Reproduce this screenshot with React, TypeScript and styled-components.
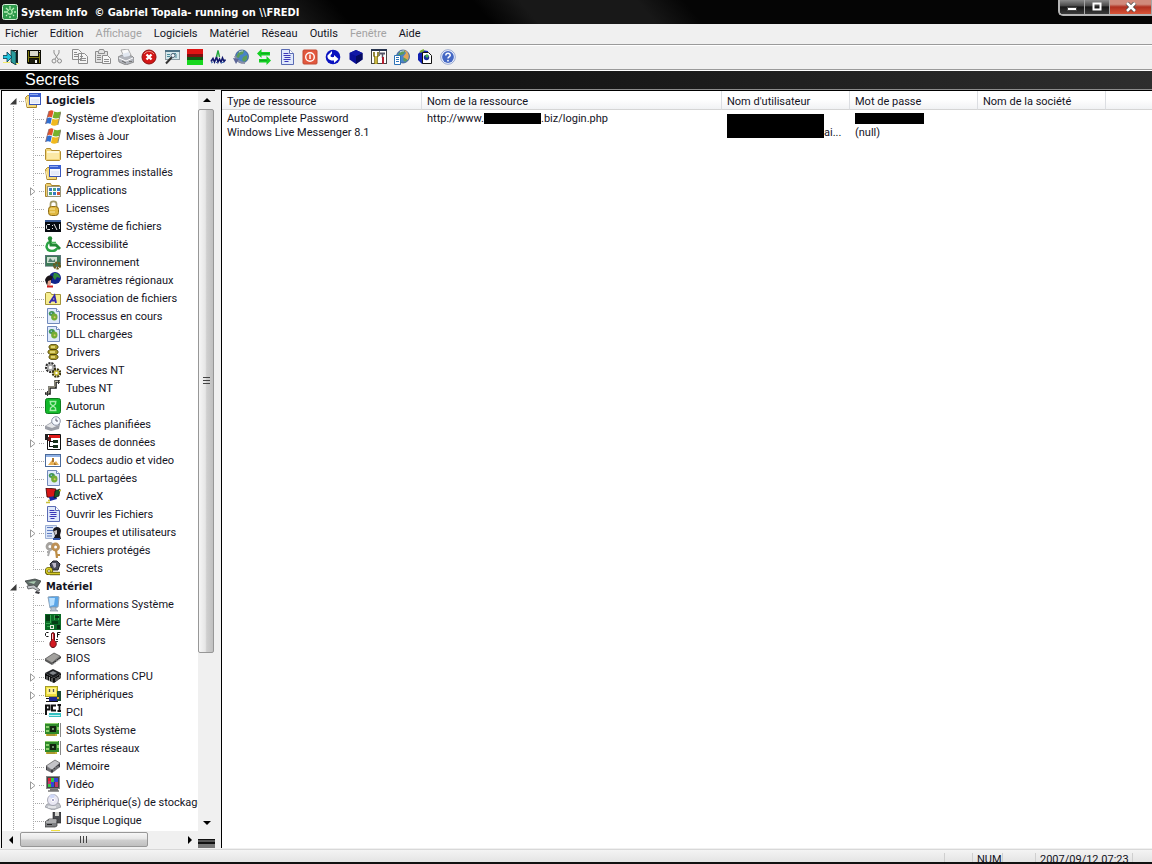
import React from "react";
import styled, { createGlobalStyle, css } from "styled-components";

const ui = `Roboto, "Noto Sans", sans-serif`;
const uiBold = `"DejaVu Sans Condensed", "DejaVu Sans", sans-serif`;

const GlobalStyle = createGlobalStyle`
  * { box-sizing: border-box; }
  body { margin: 0; background: #f0f0f0; font: 11px/14px ${ui}; color: #14141e; }
  button { font: inherit; color: inherit; border: 0; padding: 0; background: none; cursor: default; }
  a { color: inherit; text-decoration: none; }
  h1, h2, ul { margin: 0; padding: 0; font: inherit; list-style: none; }
`;

/* ---------- icons ---------- */

const windowFront = (
  <>
    <path d="M.5 5.500l2-2h3l1 2h5v10H2z" fill="#f5d97a" stroke="#a8842a" />
    <rect x="4.500" y="1.500" width="11" height="11" fill="#f4f7ff" stroke="#3a56b8" />
    <path d="M4 1h12v4H4z" fill="#3a5fd0" />
    <path d="M5 2.500h8" stroke="#8fa9ee" />
    <path d="M6 8h8M6 10h8" stroke="#d5def5" />
    <path d="M1 7l2 8" stroke="#fff0b8" />
  </>
);

const flag = (
  <>
    <path d="M4 1c2-1 3-1 4.500 0L7 7.500C5 6.500 4 6.500 2 7.500z" fill="#e2542a" />
    <path d="M9.200 1.500c2 1 4 1 6.600 0l-1.600 6.300c-2 1-4.400 1-6.600 0z" fill="#76b22c" />
    <path d="M1.800 8.200c2-1 3-1 5 0L5.500 14c-2-1-3-1-5 0z" fill="#2f6fd0" />
    <path d="M7.400 8.700c2 1 4.400 1 6.600 0l-1.500 6c-2 1.300-4.500 1.300-6.600 0z" fill="#f0b91f" />
    <path d="M15.800 2l-3 13" stroke="#6b6b4a" strokeWidth=".8" />
    <path d="M4 1L.5 14" stroke="#8d6a70" strokeWidth=".8" />
  </>
);

const dll = (
  <>
    <path d="M2.500.500h9l3 3v12h-12z" fill="#dfeafb" stroke="#7189bb" />
    <path d="M11.500.500v3h3" fill="#fff" stroke="#7189bb" />
    <ellipse cx="6.800" cy="5.500" rx="3" ry="2.500" fill="#3f9455" />
    <ellipse cx="9.300" cy="9" rx="3.200" ry="3.400" fill="#74ac35" />
    <circle cx="9.600" cy="9.300" r="1" fill="#d8c860" />
    <circle cx="6.300" cy="5.300" r=".8" fill="#9fc8e8" />
  </>
);

const doc = (
  <>
    <path d="M2.500.500h8l4 4v11h-12z" fill="#dfe8fb" stroke="#5a6bb4" />
    <path d="M10.500.500v4h4" fill="#fff" stroke="#5a6bb4" />
    <path d="M4.500 4.500h5M4.500 6.500h7M5.500 8.500h6M4.500 10.500h7M5.500 12.500h4" stroke="#3a36b8" />
  </>
);

const pciCard = (
  <>
    <path d="M0 1h14v11H0z" fill="#2f8a2a" />
    <path d="M0 1h13v1H0zM1 4h3v2H1zM12 5h2v3h-2zM1 8h3v2H1z" fill="#8fd070" />
    <path d="M5 4h6v6H5z" fill="#12240f" />
    <path d="M7 6h2v2H7z" fill="#6d906a" />
    <path d="M1 12h11v2H1z" fill="#c9b53c" />
    <path d="M15.500 1v14" stroke="#888" />
    <path d="M3 12v2M5 12v2M7 12v2M9 12v2" stroke="#5f5414" strokeWidth=".6" />
  </>
);

const globe = (
  <>
    <circle cx="9" cy="7.500" r="6.500" fill="#4a83c8" stroke="#2d4b80" strokeWidth=".7" />
    <path d="M5 4c2-2 4-3 6-2l-1 3-3 1-1 3-3-1zM10 8l4-2c1 3 0 5-3 7l-2-2z" fill="#5d9c58" />
    <path d="M6 3c2-1 3-1 4-1" stroke="#cfe6ff" />
  </>
);

const icons: Record<string, React.ReactNode> = {
  logo: (
    <>
      <rect x=".5" y=".5" width="15" height="15" rx="2" fill="#2f9a4c" stroke="#d6f0da" />
      <path d="M8 2v12M2 8h12M4 4l8 8M12 4l-8 8" stroke="#b9efb9" strokeWidth="1.300" strokeDasharray="4 1" />
      <circle cx="8" cy="8" r="1.500" fill="#2f9a4c" />
    </>
  ),
  exit: (
    <>
      <path d="M8.500 1.500h5v12h-5z" fill="#f0f0f0" stroke="#111" />
      <path d="M8 1l5 2.500V16l-5-3z" fill="#2a9c9c" stroke="#0d3434" strokeWidth=".8" />
      <path d="M14.500 1v13" stroke="#1a2a2a" />
      <path d="M0 6.500h4V3l5 5-5 5V9.500H0z" fill="#1fc4dc" stroke="#0b3a50" strokeWidth=".8" />
      <path d="M0 13.500h7M13 14.500h3" stroke="#f2ec6a" />
    </>
  ),
  save: (
    <>
      <path d="M1 1h14v14H2l-1-1z" fill="#0c0c04" />
      <path d="M2 2h1v11H2zM13 4h1v10h-1zM3 8h10v1H3z" fill="#7e7a10" />
      <path d="M4 2h8v5H4z" fill="#d9d9c9" />
      <path d="M4 10h8v4H4z" fill="#1d1d10" />
      <path d="M9 11h2v3H9z" fill="#f4f4f4" />
      <path d="M13 2h1v1h-1z" fill="#ddd" />
    </>
  ),
  cut: (
    <g fill="none" stroke="#8d8d8d">
      <path d="M5 1v3l4 6M10 1v3L6 10" />
      <circle cx="5" cy="12" r="2" />
      <circle cx="10.500" cy="12" r="2" />
    </g>
  ),
  copy: (
    <g fill="#f5f5f5" stroke="#8d8d8d">
      <path d="M.5.500h6l3 3v7h-9zM6.500 4.500h6l3 3v7h-9z" />
      <path d="M2 3.500h3M2 5.500h4M2 7.500h4M8 7.500h3M8 9.500h6M8 11.500h6" />
    </g>
  ),
  paste: (
    <g fill="#e2e2e2" stroke="#8d8d8d">
      <path d="M.5 2.500h12v11H.5z" />
      <path d="M3.500 2.500l1-2h4l1 2v2h-6zM2 6.500h4M2 8.500h4M2 10.500h4" />
      <path d="M7.500 6.500h5l3 3v5h-8z" fill="#f8f8f8" />
      <path d="M9 10.500h5M9 12.500h5" />
    </g>
  ),
  print: (
    <>
      <path d="M3 1l7-1 3 6-7 2z" fill="#fafafa" stroke="#999" strokeWidth=".8" />
      <path d="M0 8l4-2 10 1 2 2v4l-8 3-7-3z" fill="#b2b5bc" stroke="#808080" strokeWidth=".8" />
      <path d="M1 9l7 3 7-3" fill="none" stroke="#fff" />
      <path d="M4 5l7-2 1 4-6 1z" fill="#e1e7f0" />
      <path d="M4 12l4 2" stroke="#666" />
      <path d="M11 12.500h3" stroke="#777" />
    </>
  ),
  stop: (
    <>
      <circle cx="8" cy="8" r="7" fill="#d31616" stroke="#8e1010" />
      <path d="M3 5c2-3 7-4 10 0" stroke="#f08b80" fill="none" />
      <path d="M5.500 5.500l5 5M10.500 5.500l-5 5" stroke="#fff" strokeWidth="2.400" />
    </>
  ),
  report: (
    <>
      <rect x="1.500" y="1.500" width="14" height="9" fill="#d5e8ec" stroke="#8a9aa2" />
      <path d="M1 1h15v2H1z" fill="#4d7286" />
      <path d="M3 5.500h3M3 7.500h3M12 5v4M8 4.500h4" stroke="#4a8b9b" />
      <path d="M8 8l-6 6.500" stroke="#333" strokeWidth="2" />
      <circle cx="9" cy="6.500" r="2" fill="#f4fbff" stroke="#567" />
    </>
  ),
  bars: (
    <>
      <path d="M0 0h16v6H0z" fill="#e01414" />
      <path d="M0 5h16v3H0z" fill="#7c1010" />
      <path d="M0 8h16v3H0z" fill="#0d5a14" />
      <path d="M0 11h16v5H0z" fill="#17d71f" />
    </>
  ),
  graph: (
    <g fill="none">
      <path d="M1 12.500l2-3 1.500 3.500L6.500 8l1.500 5 1.500-3 1.500 3 1.500-4 1.500 3.500 1.500-2" stroke="#12186c" strokeWidth="1.600" />
      <path d="M6.500 8L8 1.500 9.500 8" stroke="#22a83c" strokeWidth="1.400" />
      <path d="M1 14l2-1M6 13l1 1M11 14l3-1" stroke="#3a6ab0" />
    </g>
  ),
  world: (
    <>
      {globe}
      <path d="M2 7c1 4 5 7 10 7" stroke="#8a8fa8" strokeWidth="2" fill="none" />
      <path d="M0 9l6 1-3 5z" fill="#5d6798" />
    </>
  ),
  swap: (
    <>
      <path d="M1 4.500L5.500 0v3H14v3.500H5.500V9z" fill="#14d022" />
      <path d="M15 11.500L10.500 7v3H3v3.500h7.500V16z" fill="#14d022" />
      <path d="M5 4.500h8M4 11.500h7" stroke="#0eaa1e" />
    </>
  ),
  doc,
  power: (
    <>
      <rect x="1" y="1" width="14" height="14" rx="1" fill="#e2583e" stroke="#c24a35" />
      <circle cx="8" cy="8" r="4.300" fill="none" stroke="#fff" strokeWidth="1.400" />
      <path d="M8 5.500v4.500" stroke="#fff" strokeWidth="1.500" />
    </>
  ),
  refresh: (
    <>
      <circle cx="8" cy="8" r="7.300" fill="#0a12c0" />
      <path d="M2.500 6.500L7 2v2.500C3.500 8 7 8.500 9 8V6l4.500 4L9 14v-2.500C4 12 2 9 2.500 6.500z" fill="#fff" />
    </>
  ),
  box: (
    <>
      <path d="M1.500 4L8 1l6.500 3v6.500L8 15l-6.500-4.500z" fill="#0b1098" />
      <path d="M8 7l6.500-3v6.500L8 15z" fill="#050a60" />
      <path d="M1.500 4L8 1l6.500 3L8 7z" fill="#1118a6" />
    </>
  ),
  tools: (
    <>
      <rect x=".5" y="1.500" width="15" height="13" fill="#fff" stroke="#444" />
      <path d="M0 0h16v2H0z" fill="#27344e" />
      <path d="M3 3v4l1 1v7M7 3v4L6 8v7" stroke="#7a6c10" strokeWidth="1.600" fill="none" />
      <path d="M5 7v8" stroke="#d9c440" strokeWidth="1.500" />
      <path d="M9 4.500h5" stroke="#556" strokeWidth="2" />
      <path d="M11.500 5v4" stroke="#556" strokeWidth="1.500" />
      <path d="M12 8v7" stroke="#b22030" strokeWidth="2" />
      <path d="M8.500 2v5" stroke="#777" />
    </>
  ),
  webdoc: (
    <>
      {globe}
      <path d="M10 1c4 1 6 5 4 10l-5-3 3-4z" fill="#e2a458" />
      <path d="M.5 6.500h6v9h-6z" fill="#fff" stroke="#2d73b8" />
      <path d="M2 8.500h3M2 10.500h3M2 12.500h3" stroke="#2d73b8" />
    </>
  ),
  eyedoc: (
    <>
      <path d="M1 5l4-4 6 1v12l-6 1-4-4z" fill="#1020b0" />
      <path d="M5.500 3.500h6l3 3v8h-9z" fill="#fff" stroke="#111" />
      <circle cx="9.500" cy="8.500" r="2.700" fill="#18309c" />
      <path d="M8 7l2-2 2 2-2 2z" fill="#3fae55" />
      <path d="M3 3l4-2" stroke="#7cb02c" strokeWidth="2" />
    </>
  ),
  help: (
    <>
      <circle cx="8" cy="8" r="7.300" fill="#f2f6ff" stroke="#7f93c5" strokeWidth=".8" />
      <circle cx="8" cy="8" r="5.900" fill="#4568c4" />
      <path d="M5.800 6.500c0-3 4.600-2.800 4.400-.2C10 8 8 7.800 8 9.600" fill="none" stroke="#fff" strokeWidth="1.500" />
      <circle cx="8" cy="11.700" r=".9" fill="#fff" />
    </>
  ),
  windowFront,
  flag,
  dll,
  pciCard,
  folder: (
    <>
      <path d="M.5 3.500l1-1h4l1 2h8l1 1v8l-1 1h-13l-1-1z" fill="#f3d578" stroke="#b08c2f" />
      <path d="M2 6h12v7H2z" fill="#fbe9a6" />
      <path d="M2 6h12" stroke="#fff8d8" strokeWidth="2" />
    </>
  ),
  apps: (
    <>
      <path d="M.5 2.500l1-1h4l1 2h8v11H.5z" fill="#f0d070" stroke="#a8842a" />
      <rect x="2.500" y="4.500" width="13" height="10" fill="#f4f8ff" stroke="#9a9678" />
      <path d="M4 6h3v3H4zM12 6h3v3h-3zM8 10h3v3H8z" fill="#3a7ac8" />
      <path d="M8 6h3v3H8zM4 10h3v3H4z" fill="#4aa480" />
      <path d="M12 10h3v3h-3z" fill="#d0563a" />
      <path d="M7.500 5v9M11.500 5v9M3 9.500h12" stroke="#fff" />
    </>
  ),
  lock: (
    <>
      <path d="M5.500 8V4c0-3.500 6-3.500 6 0v4" fill="none" stroke="#a39a68" strokeWidth="1.700" />
      <rect x="3.500" y="6.500" width="10" height="9" rx="3" fill="#e0b840" stroke="#8f6e18" />
      <path d="M5 9h5M5 12h5" stroke="#f8e7a0" />
    </>
  ),
  cmd: (
    <>
      <path d="M0 2h16v12H0z" fill="#060a10" />
      <path d="M0 2h16v2H0z" fill="#3a5a94" />
      <path d="M5 6.500H2.500L1.500 7.500v3l1 1H5M7.500 7v1M7.500 10v1M9 6l3 6M14.500 6v5" fill="none" stroke="#e5e5e5" />
    </>
  ),
  access: (
    <>
      <circle cx="5" cy="2.500" r="2.200" fill="#238a35" />
      <path d="M5 4l1 5h5l4 4" fill="none" stroke="#238a35" strokeWidth="3" />
      <path d="M4 6c-4 3-3 9 3 9 3 0 5-2 5-3" fill="none" stroke="#2ba344" strokeWidth="2.500" />
      <path d="M6 6.500h5" stroke="#4ab85a" strokeWidth="1.500" />
    </>
  ),
  env: (
    <>
      <rect x=".5" y="1.500" width="15" height="11" fill="#3c7a58" stroke="#5a7578" />
      <path d="M2 3h10v6H2z" fill="#cfdfd2" />
      <path d="M3 8l2-4 3 3 2-2v3z" fill="#557f6f" />
      <path d="M0 12.500h8" stroke="#9aa" />
      <circle cx="12" cy="11.500" r="2.800" fill="none" stroke="#6c5b1a" strokeWidth="2.600" strokeDasharray="2 .8" />
    </>
  ),
  region: (
    <>
      <circle cx="10" cy="6" r="6" fill="#10258c" />
      <path d="M9 1c4 0 6 2 6 5l-3-1-2 3-2-3z" fill="#2f8c3c" />
      <path d="M0 8c1-4 5-6 8-3l-2 4-2 1v5H3L1 11z" fill="#1a1418" />
      <path d="M3 9l3-1v4l-2 2H2z" fill="#e3a58e" />
      <path d="M2 14.500h6" stroke="#cc1e1e" strokeWidth="2" />
    </>
  ),
  assoc: (
    <>
      <path d="M.5 3.500l1-1h4l1 2h9v10h-15z" fill="#f7ee90" stroke="#a39338" />
      <path d="M4.500 13L9.500 5.500l1.500 7.500M6 10.500h5" fill="none" stroke="#3428b0" strokeWidth="1.800" />
    </>
  ),
  drivers: (
    <g stroke="#4b4206" strokeWidth=".8" fill="#aa9a28">
      <path d="M4 2l2-1.500h5L13 2v2l-2 1.500H6L4 4zM3 7l2-1.500h6L13 7v2l-2 1.500H5L3 9zM4 12l2-1.500h5l2 1.500v2l-2 1.500H6L4 14z" />
      <path d="M6 3h4M5 8h5M6 13h4" stroke="#f0e68a" strokeWidth="1.500" />
    </g>
  ),
  gears: (
    <g fill="none">
      <circle cx="5.500" cy="5.500" r="3.800" stroke="#2d2d2d" strokeWidth="3.400" strokeDasharray="1.800 .8" />
      <circle cx="5.500" cy="5.500" r="2.600" stroke="#aaa" strokeWidth="1.800" />
      <circle cx="11.500" cy="11" r="3.200" stroke="#3b3510" strokeWidth="3.200" strokeDasharray="1.800 .7" />
      <circle cx="11.500" cy="11" r="2" stroke="#cabd38" strokeWidth="1.600" />
    </g>
  ),
  pipe: (
    <g fill="none">
      <path d="M0 13.500h4.500v-6h6v-6H15" stroke="#222" strokeWidth="2.600" />
      <path d="M1 13h3v-6h6V1.500h5" stroke="#bdb9a2" />
      <path d="M13.500 0v4M2.500 11v5" stroke="#333" />
    </g>
  ),
  autorun: (
    <>
      <rect x=".5" y=".5" width="15" height="15" rx="2" fill="#12b82a" stroke="#0d7c1f" />
      <path d="M4.500 3.500h7M4.500 12.500h7M5.500 4v2L8 8l-2.500 2v2M10.500 4v2L8 8l2.500 2v2" fill="none" stroke="#a5eeaa" strokeWidth="1.400" />
    </>
  ),
  tasks: (
    <>
      <path d="M0 10l8-5 7 3-1 5-8 2-6-2z" fill="#9a9da5" />
      <path d="M1 10l7-4 6 3-7 3z" fill="#e4e5e8" />
      <circle cx="11" cy="5" r="4.300" fill="#f6f9ff" stroke="#8b93a6" />
      <path d="M11 2.500V5h2" fill="none" stroke="#556" />
    </>
  ),
  db: (
    <>
      <path d="M2.500.500h13v15h-13z" fill="#fff" stroke="#111" />
      <path d="M4 1h11v3H4z" fill="#e01a1a" />
      <path d="M0 0h3v6H0z" fill="#222" />
      <path d="M4.500 4v9M4.500 7.500h5M4.500 12.500h5" stroke="#111" fill="none" />
      <path d="M8 6h5v3H8zM8 11h5v3H8z" fill="#16301a" />
      <path d="M3 3h3v4H3z" fill="#6c1d1d" />
    </>
  ),
  codecs: (
    <>
      <rect x=".5" y="2.500" width="15" height="12" fill="#fff" stroke="#4a6a9a" />
      <path d="M1 3h14v2H1z" fill="#8fb0e4" />
      <path d="M3 13l4-5 2 3 2-2 3 4z" fill="#e8b256" />
      <path d="M7 6h2v4H7zM9 10l3 3H9z" fill="#a8742e" />
    </>
  ),
  activex: (
    <>
      <path d="M1 0l10 1-1 9-8-1z" fill="#d61717" stroke="#300" strokeWidth=".8" />
      <path d="M4 9l7-1 1 3-7 2z" fill="#1a28a0" />
      <path d="M10 3l5-2-1 7-5 2z" fill="#175a28" stroke="#111" strokeWidth=".7" />
      <path d="M14 2.500h2M1 14.500h4M3 12.500h2" stroke="#c7bf38" strokeWidth="1.500" />
    </>
  ),
  users: (
    <>
      <path d="M.5 1.500h11v13H.5z" fill="#dce6f8" stroke="#9db0d5" />
      <path d="M2 3.500h6M2 6.500h6M2 9.500h5M2 12h5" stroke="#5f7cc0" />
      <path d="M8 6c1-4 8-4 8 1l-1 4 1 4H8l2-3z" fill="#17171c" />
      <path d="M9 7l3-1v4l-2 1z" fill="#c8c2c4" />
      <path d="M8 14h7v2H8z" fill="#3355a8" />
    </>
  ),
  keys: (
    <>
      <circle cx="5" cy="4.500" r="3" fill="none" stroke="#a5a29e" strokeWidth="2.800" />
      <path d="M5 7L3 14M5 10H2" stroke="#aaa" strokeWidth="2" />
      <circle cx="10.500" cy="5" r="3" fill="none" stroke="#bd9055" strokeWidth="2.800" />
      <path d="M11 8l1 8M12 13h3" stroke="#bd8d45" strokeWidth="2.200" />
    </>
  ),
  secrets: (
    <>
      <path d="M5 4l3-3 4 0 3 3-2 6H7z" fill="#4a4c5a" stroke="#22232a" />
      <path d="M7 3l4 0v4l-2 1z" fill="#bdb8c8" />
      <circle cx="4" cy="11" r="2.500" fill="none" stroke="#4c4508" strokeWidth="3.200" />
      <circle cx="4" cy="11" r="2.500" fill="none" stroke="#d3c927" strokeWidth="1.800" />
      <path d="M5 13.500h10" stroke="#4c4508" strokeWidth="3.400" />
      <path d="M5 13.500h10" stroke="#d3c927" strokeWidth="1.800" />
    </>
  ),
  hardware: (
    <>
      <path d="M0 3l10-2 6 2-4 6H5z" fill="#5f6b68" stroke="#2e3332" strokeWidth=".7" />
      <path d="M3 4l8-1-2 3z" fill="#a8c9b0" />
      <path d="M2 8l7-1 6 5-2 1-5-3-5 1z" fill="#c3c6ca" stroke="#3d3f42" strokeWidth=".7" />
      <path d="M11 13l4 1-1 2-4-1z" fill="#3a3a3f" />
    </>
  ),
  sysinfo: (
    <>
      <path d="M3 1l9-1 2 1-1 10-8 1z" fill="#5aa6e8" stroke="#90a4b8" />
      <path d="M4 2h6l-1 7-4 1z" fill="#b8e0ff" />
      <path d="M6 11h5v3l2 1H5l1-1z" fill="#b8c3ce" stroke="#8592a0" strokeWidth=".7" />
    </>
  ),
  mobo: (
    <>
      <path d="M0 0h16v16H0z" fill="#0b6a26" />
      <path d="M1 1h4v6H1zM7 7h6v3H7z" fill="#063d14" />
      <path d="M5.500 1v8M9.500 1v5M13.500 1v5M1 9.500h4M2 12.500h3" stroke="#35a84e" />
      <path d="M5 11h4v4H5z" fill="#e8ece0" />
      <path d="M6 12h2v2H6z" fill="#2a7c3e" />
      <path d="M12 11h3v4h-3zM10 2h4v2h-4z" fill="#0a2c12" />
    </>
  ),
  sensor: (
    <>
      <path d="M3.500.500H1.500L.5 1.500v2l1 1h2M15.500.500h-3v5M12.500 2.500h2" fill="none" stroke="#111" />
      <path d="M6.500 1.500c0-1 3-1 3 0v7c3 2 2 7-1.500 7s-4-5-1.500-7z" fill="#d31a22" stroke="#540d12" />
      <path d="M7.500 2v5" stroke="#f6c4c4" />
      <path d="M11 7.500h2M11 9.500h2" stroke="#333" />
    </>
  ),
  chip: (
    <>
      <path d="M0 9l9-6 6 3-8 7z" fill="#a2a19e" stroke="#444" strokeWidth=".7" />
      <path d="M0 9v2l7 4v-2z" fill="#555" />
      <path d="M7 13v2l9-7V6z" fill="#383838" />
      <path d="M8 13v2M10 12v2M12 10v2M14 9v2" stroke="#bbb" strokeWidth=".8" />
    </>
  ),
  memory: (
    <>
      <path d="M1 8l9-6 5 3-8 7z" fill="#c4c4c8" stroke="#555" strokeWidth=".7" />
      <path d="M1 8v4l6 3v-3zM7 12v3l8-6V5z" fill="#3c3c42" />
      <path d="M3 9v4M5 10v4M9 11v3M11 9v3M13 8v3" stroke="#ccc" strokeWidth=".7" />
    </>
  ),
  cpu: (
    <>
      <path d="M0 5l8-4 8 4-7 5z" fill="#1d1f22" />
      <path d="M4 5l4-2 4 2-4 2z" fill="#80858a" />
      <path d="M0 5v6l9 4v-5zM9 10v5l7-5V5z" fill="#0c0d0e" />
      <path d="M2 8v4M4.500 9v4M7 10v4M11 10v3M13 9v3M15 7v3" stroke="#a8a8a8" strokeWidth=".9" />
    </>
  ),
  periph: (
    <>
      <rect x=".5" y=".5" width="12" height="10" fill="#efe040" stroke="#a59c26" />
      <path d="M2 2h9v6H2z" fill="#fff48c" />
      <path d="M4.500 3v3M8.500 3v3" stroke="#555" strokeWidth="1.300" />
      <path d="M12 5h4v10h-4z" fill="#1b4b32" />
      <path d="M4 11h8v4H4z" fill="#1c2590" />
      <path d="M1 12.500h3M1 15.500h12" stroke="#111" />
      <path d="M12 11h2v2h-2z" fill="#d8a020" />
    </>
  ),
  pci: (
    <>
      <path d="M1 11V1.500h3.500v4H1M11 1.500H7v5h4" fill="none" stroke="#111" strokeWidth="2" />
      <path d="M14.500 0v8M12.500 1h3.500M12.500 7h3.500" stroke="#111" strokeWidth="1.800" />
      <path d="M4 9h12v4H4z" fill="#35c0c0" />
      <path d="M3 11.500h12" stroke="#c8f4f4" />
    </>
  ),
  video: (
    <>
      <rect x="1.500" y=".5" width="13" height="12" fill="#444" stroke="#888" />
      <path d="M3 2h3v4H3z" fill="#d23" />
      <path d="M6 2h3v4H6zM3 8h3v3H3z" fill="#3c4" />
      <path d="M9 2h4v4H9zM6 6h3v5H6z" fill="#34d" />
      <path d="M10 6h3v5h-3zM3 5h3v3H3z" fill="#c3366a" />
      <path d="M5 13.500h8M3 15h11" stroke="#777" strokeWidth="1.500" />
    </>
  ),
  storage: (
    <>
      <path d="M2 10l-2 3 8 3 8-3-2-4z" fill="#c2c5cb" stroke="#8b8e96" strokeWidth=".7" />
      <circle cx="8" cy="6" r="5.500" fill="#e9e8f4" stroke="#9697a5" strokeWidth=".8" />
      <path d="M8 6L4 2c2-2 5-2 6-1z" fill="#cfd8f8" />
      <circle cx="8" cy="6" r="1.700" fill="#a9a6c8" stroke="#fff" />
      <path d="M3 13h8" stroke="#fff" />
    </>
  ),
  disk: (
    <>
      <path d="M8 0h8v11H8z" fill="#4a4c50" stroke="#222" strokeWidth=".6" />
      <path d="M10 0h4v4h-4z" fill="#d5d5d0" />
      <path d="M0 10l4-3h9l-1 3v4l-2 1H0z" fill="#7d7f82" stroke="#333" strokeWidth=".7" />
      <path d="M1 10h10M4 8h7" stroke="#dcdcdc" />
      <path d="M2 12.500h5" stroke="#222" />
    </>
  ),
  device: (
    <>
      <path d="M6 0h9v8H6z" fill="#f0e040" />
      <path d="M2 8h12v7H2z" fill="#999" />
    </>
  ),
};

const IconSvg = styled.svg`
  display: block;
  flex: none;
  width: 16px;
  height: 16px;
`;

const Icon = ({ name }: { name: string }) => (
  <IconSvg viewBox="0 0 16 16" aria-hidden="true">
    {icons[name]}
  </IconSvg>
);

const Label = styled.span`
  padding-top: 2px;
`;

/* ---------- frame ---------- */

const Window = styled.div`
  display: flex;
  flex-direction: column;
  height: 100vh;
  overflow: hidden;
  background: #f0f0f0;
`;

const TitleBar = styled.header`
  display: flex;
  align-items: flex-start;
  justify-content: space-between;
  flex: none;
  height: 24px;
  padding-left: 2px;
  background: linear-gradient(50deg, #151515 0 26%, #020202 30% 42%, #181818 46% 56%, #050505 60%);
  color: #fff;
`;

const Title = styled.h1`
  display: flex;
  align-items: center;
  gap: 3px;
  height: 24px;
  font: 700 11px/14px ${uiBold};
  white-space: pre;
`;

const WindowButtons = styled.div`
  display: flex;
  height: 16px;
  border: 1px solid #b5b5b5;
  border-width: 0 0 2px 2px;
  border-radius: 0 0 0 5px;
  overflow: hidden;
`;

const WindowButton = styled.button<{ $close?: boolean }>`
  display: grid;
  place-items: center;
  width: ${(p) => (p.$close ? 42 : 25)}px;
  border-right: 1px solid #a5a5a5;
  background: ${(p) =>
    p.$close
      ? "linear-gradient(#d08a7c 0 30%, #b03020 50%, #d85438)"
      : "linear-gradient(#8a8a8a, #4c4c4c 40%, #161616 50%, #3c3c3c)"};
`;

const MenuBar = styled.nav`
  display: flex;
  align-items: center;
  flex: none;
  gap: 12px;
  height: 21px;
  padding: 0 5px;
  border-bottom: 1px solid #9a9a9a;
`;

const MenuItem = styled.button`
  &:disabled {
    color: #a3a3a3;
  }
`;

const ToolBar = styled.div`
  display: flex;
  align-items: center;
  flex: none;
  gap: 7px;
  height: 25px;
  padding: 0 3px 2px;
  border-top: 1px solid #fff;
  border-bottom: 1px solid #9a9a9a;
`;

const Caption = styled.h2`
  flex: none;
  height: 20px;
  padding-left: 25px;
  border-top: 1px solid #fff;
  border-bottom: 1px solid #8c8c8c;
  background: linear-gradient(90deg, #000, #2e2e2e);
  color: #fff;
  font: 16px/18px "Liberation Sans", Arial, sans-serif;
`;

const Panes = styled.main`
  display: grid;
  grid-template-columns: 221px 1fr;
  flex: 1;
  min-height: 0;
`;

/* ---------- tree ---------- */

const TreePane = styled.section`
  display: grid;
  grid-template-columns: 1fr 17px;
  grid-template-rows: 1fr 17px;
  min-height: 0;
  margin: 0 6px 0 1px;
  border-left: 1px solid #000;
  border-top: 1px solid #000;
`;

const Tree = styled.ul`
  min-width: 0;
  overflow: hidden;
  background: #fff;
`;

const dots = "#a8a8a8 0 1px, transparent 1px 2px";

const TreeRow = styled.div<{ $bold?: boolean }>`
  display: flex;
  align-items: center;
  height: 18px;
  padding-left: 11px;
  white-space: nowrap;
  ${(p) => p.$bold && css`font: 700 11px/14px ${uiBold};`}
`;

type Line = "full" | "top" | "bottom";

const Guide = styled.span<{ $wide?: boolean; $branch?: boolean; $line: Line }>`
  position: relative;
  flex: none;
  align-self: stretch;
  width: ${(p) => (p.$wide ? 20 : 12)}px;
  background-repeat: no-repeat;
  background-image: repeating-linear-gradient(180deg, ${dots})
    ${(p) => p.$branch && css`, repeating-linear-gradient(90deg, ${dots})`};
  background-size: 1px ${(p) => (p.$line === "full" ? "100%" : "50%")}, 100% 1px;
  background-position: 0 ${(p) => (p.$line === "bottom" ? "100%" : "0")}, 0 10px;
`;

const Expander = styled.button`
  position: absolute;
  left: -4px;
  top: 6px;
  display: block;
  width: 9px;
  height: 9px;
  background: #fff;
  svg {
    display: block;
  }
`;

const TreeLink = styled.a`
  display: flex;
  align-items: center;
  gap: 5px;
`;

const Toggle = ({ open, label }: { open?: boolean; label: string }) => (
  <Expander aria-label={label} aria-expanded={!!open}>
    <svg width="9" height="9" viewBox="0 0 9 9">
      {open ? <path d="M7.500 1v6.500H1z" fill="#3a3a3a" /> : <path d="M1.500.8L6 4.500 1.500 8.200z" fill="#fff" stroke="#999" />}
    </svg>
  </Expander>
);

type Item = [label: string, icon: string, expandable?: boolean];

const software: Item[] = [
  ["Système d'exploitation", "flag"],
  ["Mises à Jour", "flag"],
  ["Répertoires", "folder"],
  ["Programmes installés", "windowFront"],
  ["Applications", "apps", true],
  ["Licenses", "lock"],
  ["Système de fichiers", "cmd"],
  ["Accessibilité", "access"],
  ["Environnement", "env"],
  ["Paramètres régionaux", "region"],
  ["Association de fichiers", "assoc"],
  ["Processus en cours", "dll"],
  ["DLL chargées", "dll"],
  ["Drivers", "drivers"],
  ["Services NT", "gears"],
  ["Tubes NT", "pipe"],
  ["Autorun", "autorun"],
  ["Tâches planifiées", "tasks"],
  ["Bases de données", "db", true],
  ["Codecs audio et video", "codecs"],
  ["DLL partagées", "dll"],
  ["ActiveX", "activex"],
  ["Ouvrir les Fichiers", "doc"],
  ["Groupes et utilisateurs", "users", true],
  ["Fichiers protégés", "keys"],
  ["Secrets", "secrets"],
];

const hardware: Item[] = [
  ["Informations Système", "sysinfo"],
  ["Carte Mère", "mobo"],
  ["Sensors", "sensor"],
  ["BIOS", "chip"],
  ["Informations CPU", "cpu", true],
  ["Périphériques", "periph", true],
  ["PCI", "pci"],
  ["Slots Système", "pciCard"],
  ["Cartes réseaux", "pciCard"],
  ["Mémoire", "memory"],
  ["Vidéo", "video", true],
  ["Périphérique(s) de stockage", "storage"],
  ["Disque Logique", "disk"],
  ["", "device"],
];

const Branch = ({ label, icon, items, first }: { label: string; icon: string; items: Item[]; first?: boolean }) => (
  <li>
    <TreeRow $bold>
      <Guide $branch $line={first ? "bottom" : "full"}>
        <Toggle open label={label} />
      </Guide>
      <TreeLink href="#">
        <Icon name={icon} />
        <Label>{label}</Label>
      </TreeLink>
    </TreeRow>
    <ul>
      {items.map(([text, name, expandable], i) => (
        <li key={i}>
          <TreeRow>
            <Guide $wide $line="full" />
            <Guide $branch $line={first && i === items.length - 1 ? "top" : "full"}>
              {expandable && <Toggle label={text} />}
            </Guide>
            <TreeLink href="#">
              <Icon name={name} />
              <Label>{text}</Label>
            </TreeLink>
          </TreeRow>
        </li>
      ))}
    </ul>
  </li>
);

/* ---------- scroll bars ---------- */

const ScrollBar = styled.div<{ $horizontal?: boolean }>`
  display: flex;
  flex-direction: ${(p) => (p.$horizontal ? "row" : "column")};
  background: #f0f0f0;
`;

const ScrollArrow = styled.button`
  display: grid;
  place-items: center;
  flex: none;
  width: 17px;
  height: 17px;
`;

const Track = styled.div<{ $horizontal?: boolean }>`
  display: flex;
  flex: 1;
  flex-direction: ${(p) => (p.$horizontal ? "row" : "column")};
`;

const Thumb = styled.div<{ $horizontal?: boolean }>`
  display: grid;
  place-items: center;
  flex: ${(p) => (p.$horizontal ? "0 0 79%" : "0 0 77%")};
  margin: ${(p) => (p.$horizontal ? "1px 1px" : "1px 0")};
  width: ${(p) => (p.$horizontal ? "auto" : "16px")};
  border: 1px solid #979797;
  border-radius: 2px;
  background: linear-gradient(${(p) => (p.$horizontal ? "180deg" : "90deg")}, #f6f6f6, #e6e6e6 45%, #cfcfcf 55%, #c0c0c0);
`;

const arrows = { up: "M0 6l4-4 4 4z", down: "M0 2l4 4 4-4z", left: "M6 0L2 4l4 4z", right: "M2 0l4 4-4 4z" };

const Arrow = ({ to }: { to: keyof typeof arrows }) => (
  <ScrollArrow aria-label={to}>
    <svg width="8" height="8" viewBox="0 0 8 8">
      <path d={arrows[to]} fill="#000" />
    </svg>
  </ScrollArrow>
);

const Corner = styled.div`
  align-self: end;
  height: 9px;
  background: linear-gradient(#111 0 1px, #555 1px 3px, #111 3px 5px, #777 5px);
`;

/* ---------- list ---------- */

const ListPane = styled.section`
  min-width: 0;
  overflow: hidden;
  border-left: 1px solid #000;
  border-top: 1px solid #000;
  background: #fff;
`;

const Table = styled.table`
  width: 100%;
  table-layout: fixed;
  border-collapse: separate;
  border-spacing: 0;
  text-align: left;
  white-space: nowrap;
`;

const Head = styled.th`
  height: 19px;
  padding: 3px 5px 0;
  border-right: 1px solid #dcdee2;
  border-bottom: 1px solid #d5d5d5;
  background: linear-gradient(#fff 45%, #f1f2f4);
  font-weight: 400;
  &:last-child {
    border-right: 0;
  }
`;

const Cell = styled.td`
  height: 14px;
  padding: 0 5px;
  line-height: 14px;
  overflow: hidden;
`;

const Body = styled.tbody`
  &::before {
    content: "";
    display: table-row;
    height: 2px;
  }
`;

const Redacted = styled.span<{ $width: number; $joined?: "above" | "below" }>`
  display: inline-block;
  vertical-align: ${(p) => (p.$joined === "above" ? "top" : "bottom")};
  width: ${(p) => p.$width}px;
  height: ${(p) => (p.$joined ? 12 : 11)}px;
  margin-bottom: ${(p) => (p.$joined ? 0 : 2)}px;
  background: #000;
`;

/* ---------- status bar ---------- */

const StatusBar = styled.footer`
  display: flex;
  justify-content: flex-end;
  flex: none;
  height: 15px;
  padding-top: 3px;
  overflow: hidden;
  border-top: 1px solid #d8d8d8;
  border-bottom: 2px solid #111;
  background: linear-gradient(#f4f4f4, #e4e4e4);
  margin-top: 1px;
`;

const StatusCell = styled.span<{ $width: number }>`
  width: ${(p) => p.$width}px;
  padding-left: 4px;
  border-left: 1px solid #cfcfcf;
  white-space: nowrap;
  line-height: 14px;
`;

const menus: [string, boolean?][] = [
  ["Fichier"],
  ["Edition"],
  ["Affichage", true],
  ["Logiciels"],
  ["Matériel"],
  ["Réseau"],
  ["Outils"],
  ["Fenêtre", true],
  ["Aide"],
];

const tools = [
  "exit", "save", "cut", "copy", "paste", "print", "stop", "report", "bars", "graph",
  "world", "swap", "doc", "power", "refresh", "box", "tools", "webdoc", "eyedoc", "help",
];

export default function App() {
  return (
    <Window>
      <GlobalStyle />
      <TitleBar>
        <Title>
          <Icon name="logo" />
          <Label>{"System Info  © Gabriel Topala- running on \\\\FREDI"}</Label>
        </Title>
        <WindowButtons>
          <WindowButton aria-label="Réduire">
            <svg width="12" height="10" viewBox="0 0 12 10">
              <path d="M1.500 5.500h9v3h-9z" fill="#fff" stroke="#444" />
            </svg>
          </WindowButton>
          <WindowButton aria-label="Agrandir">
            <svg width="12" height="10" viewBox="0 0 12 10">
              <path d="M2.500 1.500h7v6h-7z" fill="none" stroke="#fff" strokeWidth="2" />
            </svg>
          </WindowButton>
          <WindowButton $close aria-label="Fermer">
            <svg width="12" height="10" viewBox="0 0 12 10">
              <path d="M2 1l8 8M10 1L2 9" stroke="#444" strokeWidth="4" />
              <path d="M2 1l8 8M10 1L2 9" stroke="#fff" strokeWidth="2.500" />
            </svg>
          </WindowButton>
        </WindowButtons>
      </TitleBar>
      <MenuBar>
        {menus.map(([label, disabled]) => (
          <MenuItem key={label} disabled={disabled}>
            {label}
          </MenuItem>
        ))}
      </MenuBar>
      <ToolBar role="toolbar">
        {tools.map((name) => (
          <button key={name} aria-label={name}>
            <Icon name={name} />
          </button>
        ))}
      </ToolBar>
      <Caption>Secrets</Caption>
      <Panes>
        <TreePane>
          <Tree>
            <Branch label="Logiciels" icon="windowFront" items={software} first />
            <Branch label="Matériel" icon="hardware" items={hardware} />
          </Tree>
          <ScrollBar>
            <Arrow to="up" />
            <Track>
              <Thumb>
                <svg width="7" height="8" viewBox="0 0 7 8">
                  <path d="M0 .5h7M0 3.500h7M0 6.500h7" stroke="#444" />
                </svg>
              </Thumb>
            </Track>
            <Arrow to="down" />
          </ScrollBar>
          <ScrollBar $horizontal>
            <Arrow to="left" />
            <Track $horizontal>
              <Thumb $horizontal>
                <svg width="8" height="7" viewBox="0 0 8 7">
                  <path d="M.5 0v7M3.500 0v7M6.500 0v7" stroke="#444" />
                </svg>
              </Thumb>
            </Track>
            <Arrow to="right" />
          </ScrollBar>
          <Corner />
        </TreePane>
        <ListPane>
          <Table>
            <colgroup>
              <col width="200" />
              <col width="300" />
              <col width="128" />
              <col width="128" />
              <col width="128" />
              <col />
            </colgroup>
            <thead>
              <tr>
                <Head>Type de ressource</Head>
                <Head>Nom de la ressource</Head>
                <Head>Nom d'utilisateur</Head>
                <Head>Mot de passe</Head>
                <Head>Nom de la société</Head>
                <Head />
              </tr>
            </thead>
            <Body>
              <tr>
                <Cell>AutoComplete Password</Cell>
                <Cell>
                  http://www.
                  <Redacted $width={57} />
                  .biz/login.php
                </Cell>
                <Cell>
                  <Redacted $width={97} $joined="below" />
                </Cell>
                <Cell>
                  <Redacted $width={69} />
                </Cell>
                <Cell />
                <Cell />
              </tr>
              <tr>
                <Cell>Windows Live Messenger 8.1</Cell>
                <Cell />
                <Cell>
                  <Redacted $width={97} $joined="above" />
                  ai...
                </Cell>
                <Cell>(null)</Cell>
                <Cell />
                <Cell />
              </tr>
            </Body>
          </Table>
        </ListPane>
      </Panes>
      <StatusBar>
        <StatusCell $width={28} />
        <StatusCell $width={30}>NUM</StatusCell>
        <StatusCell $width={33} />
        <StatusCell $width={97}>2007/09/12 07:23</StatusCell>
        <StatusCell $width={20} />
      </StatusBar>
    </Window>
  );
}
